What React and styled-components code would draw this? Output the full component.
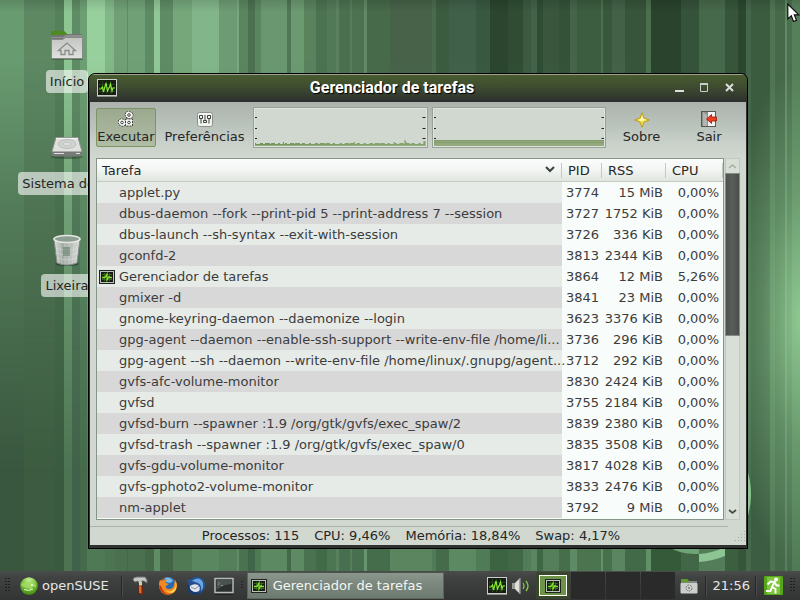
import React from 'react';
import styled, { createGlobalStyle, css } from 'styled-components';

const GlobalStyle = createGlobalStyle`
  *, *::before, *::after { box-sizing: border-box; }
  body {
    margin: 0;
    overflow: hidden;
    font: 13px/15px "DejaVu Sans", sans-serif;
    color: #262626;
  }
  button { font: inherit; color: inherit; padding: 0; border: 0; background: none; }
  svg { display: block; flex: none; }
`;

/* Wallpaper stripes: [start, colour at the top, colour at the bottom] */
const stripes = [
  [0, '#699b70', '#39563e'], [24, '#5d8862', '#3c5b40'], [55, '#54805a', '#395a3f'],
  [64, '#8dc593', '#4d7352'], [72, '#5e8c64', '#40624a'], [80, '#6c9f73', '#446a4b'],
  [87, '#98d09d', '#4f7855'], [105, '#82b788', '#4c7452'], [114, '#709f75', '#4a7050'],
  [127, '#5f8c65', '#436748'], [128, '#70a076', '#4a7050'], [145, '#5d8b63', '#446848'],
  [154, '#90c796', '#5f8c64'], [160, '#5e8b64', '#426645'], [173, '#75a77b', '#4f7a54'],
  [192, '#82b589', '#5a8660'], [219, '#6d9c74', '#557f5a'], [237, '#7aa77f', '#608c66'],
  [239, '#5b855f', '#4a7150'], [248, '#4b7150', '#40654a'], [255, '#5b8560', '#4d7a54'],
  [261, '#6a9770', '#5c8962'], [287, '#4f7655', '#44694a'], [291, '#6b9971', '#5d8a63'],
  [304, '#59825d', '#4a7250'], [316, '#4c7251', '#426a48'], [327, '#527957', '#4c7551'],
  [336, '#5b8260', '#57825d'], [339, '#4b7050', '#487050'], [350, '#587d5b', '#557f5a'],
  [352, '#4d7251', '#487050'], [364, '#628866', '#69956f'], [367, '#466a4a', '#456c4b'],
  [390, '#476249', '#5a855f'], [432, '#4c6b4e', '#507b56'], [436, '#3c5c3f', '#456b4a'],
  [449, '#41604a', '#5c8862'], [476, '#395840', '#4f7b56'], [490, '#2b452e', '#3c6342'],
  [508, '#304d33', '#426848'], [523, '#3b5a40', '#527c58'], [531, '#42624a', '#5a8560'],
  [537, '#304d34', '#3f6745'], [543, '#3a573e', '#547f5a'], [559, '#345238', '#466e4b'],
  [570, '#46644b', '#5e8b64'], [577, '#3c5d3f', '#4b744f'], [601, '#4c704e', '#63906a'],
  [603, '#38583c', '#47704c'], [612, '#436147', '#5a8560'], [625, '#36553a', '#426948'],
  [646, '#4c704f', '#628f68'], [651, '#29432c', '#345a3a'], [681, '#35523a', '#416746'],
  [699, '#47694b', '#527d58'], [725, '#36553a', '#3c603f'], [738, '#2b472e', '#365539'],
  [746, '#45664a', '#45694a'], [751, '#3c5c3f', '#3c5d42'], [770, '#507555', '#4d7552'],
  [775, '#456949', '#446848'], [785, '#608a64', '#578060'], [787, '#4a6e4e', '#466a4a'],
  [792, '#56805a', '#507a55'],
];
const band = (n) =>
  'linear-gradient(90deg,' +
  stripes
    .map((s, i) => `${s[n]} ${s[0] / 8}% ${(i + 1 < stripes.length ? stripes[i + 1][0] : 800) / 8}%`)
    .join(',') +
  ')';

const Desktop = styled.div`
  position: relative;
  height: 100vh;
  display: flex;
  flex-direction: column;
  overflow: hidden;
  background: ${band(2)};
  &::before, &::after { content: ''; position: absolute; inset: 0; }
  &::before {
    background: ${band(1)};
    mask-image: linear-gradient(#000 10%, rgba(0, 0, 0, .55) 35%, transparent 80%);
  }
  &::after {
    background:
      radial-gradient(ellipse 76px 250px at 100% 53%, rgba(162, 226, 165, .75), rgba(162, 226, 165, .3) 50%, transparent),
      linear-gradient(rgba(0, 0, 0, .12), transparent 12px);
  }
`;
const Emblem = styled.svg`
  position: absolute;
  z-index: 1;
  right: 40px;
  bottom: 30px;
`;
const Workspace = styled.main`
  position: relative;
  z-index: 1;
  flex: 1;
  padding: 30px 18px;
`;
const Shortcuts = styled.ul`
  list-style: none;
  margin: 0;
  padding: 0;
  display: grid;
  grid-template-columns: 98px;
  gap: 25px;
`;
const Shortcut = styled.li`
  display: flex;
  flex-direction: column;
  align-items: center;
  gap: 6px;
  height: 77px;
`;
const ShortcutLabel = styled.span`
  padding: 4px;
  border-radius: 4px;
  background: rgba(255, 255, 255, .6);
  white-space: nowrap;
`;

const Window = styled.section`
  position: absolute;
  inset: 73px 52px 22px 88px;
  display: flex;
  flex-direction: column;
  border: 1px solid #000;
  border-radius: 7px 7px 0 0;
  background: #303231;
  padding: 0 1px 3px;
  overflow: hidden;
`;
const TitleBar = styled.header`
  height: 28px;
  flex: none;
  display: flex;
  align-items: center;
  margin: 0 -1px;
  padding: 0 8px 2px;
  border-top: 1px solid #9ca08f;
  background: linear-gradient(#485b2e, #3f4e30 40%, #2d2f2f);
`;
const Title = styled.h1`
  flex: 1;
  margin: 0;
  text-align: center;
  font: bold 16px/20px Roboto, sans-serif;
  color: #fff;
  text-shadow: 1px 1px 1px #000;
`;
const WindowButton = styled.button`
  width: 25px;
  height: 24px;
  display: grid;
  place-items: center;
`;
const Controls = styled.div`
  display: flex;
  margin-right: -3px;
`;
const Body = styled.div`
  flex: 1;
  min-height: 0;
  display: flex;
  flex-direction: column;
  background: linear-gradient(#abb3ac, #bcc5bd 26px, #c8d0c9 40px, #d1d8d0 57px);
`;
const Toolbar = styled.div`
  display: flex;
  align-items: flex-start;
  padding: 5px 5px 10px 6px;
  height: 56px;
  flex: none;
`;
const ToolButton = styled.button`
  flex: none;
  height: 39px;
  margin-top: 1px;
  width: ${(p) => p.$width};
  display: flex;
  flex-direction: column;
  align-items: center;
  justify-content: center;
  gap: 1px;
  border-radius: 2px;
  border: 1px solid transparent;
  ${(p) => p.$active && css`
    border-color: #7c9566;
    background: linear-gradient(#9ba98f, #b0bda5);
  `}
`;
const Graphs = styled.div`
  flex: 1;
  display: grid;
  grid-template-columns: 1fr 1fr;
  gap: 4px;
`;
const Graph = styled.div`
  height: 41px;
  border: 1px solid #98a299;
  padding: 1px;
  box-shadow: inset 0 0 0 1px #dee4dd;
  background: #d1d8d0;
  svg { width: 100%; height: 100%; }
`;
const Listing = styled.div`
  flex: 1;
  min-height: 0;
  display: flex;
  gap: 1px;
  padding: 0 6px;
`;
const Frame = styled.div`
  flex: 1;
  min-width: 0;
  overflow: hidden;
  border: 1px solid #879488;
  background: #f8fcfa;
`;
const Table = styled.table`
  width: 100%;
  table-layout: fixed;
  border-collapse: separate;
  border-spacing: 0;
`;
const Column = styled.col`
  width: ${(p) => p.$width};
`;
const HeadCell = styled.th`
  height: 23px;
  padding: 0 6px 0 ${(p) => (p.$first ? '5px' : '6px')};
  text-align: left;
  font-weight: normal;
  border-bottom: 1px solid #c5ccc3;
  background:
    linear-gradient(#c3cac1, #c3cac1) right 0 center / 1px 15px no-repeat,
    linear-gradient(#fbfdfc, #f2f5f2 50%, #e0e6df);
  > div { display: flex; justify-content: space-between; align-items: center; }
`;
const Row = styled.tr`
  height: 21px;
  --stripe: #e6ebe8;
  &:nth-child(even) { --stripe: #d8d8d8; }
`;
const TaskCell = styled.td`
  padding: 0 0 0 2px;
  background: var(--stripe);
  color: #3c3c3c;
`;
const TaskName = styled.div`
  display: grid;
  grid-template-columns: 16px 1fr;
  gap: 4px;
  align-items: center;
  height: 21px;
  span {
    grid-column: 2;
    white-space: nowrap;
  }
`;
const ValueCell = styled.td`
  padding: 0 ${(p) => (p.$last ? '4px' : '3px')} 0 0;
  text-align: right;
  white-space: nowrap;
  color: #3c3c3c;
`;
const Scrollbar = styled.div`
  width: 15px;
  display: flex;
  flex-direction: column;
  border: 1px solid #c0c8bf;
  background: #d8dfd7;
`;
const ScrollButton = styled.button`
  height: 14px;
  flex: none;
  display: grid;
  place-items: center;
`;
const ScrollTrack = styled.div`
  flex: 1;
  margin: 0 -1px;
`;
const ScrollThumb = styled.div`
  height: 49%;
  border: 1px solid #858c86;
  background: linear-gradient(90deg, #4f5350, #595e5a 50%, #4a4e4b);
`;
const StatusBar = styled.footer`
  flex: none;
  display: flex;
  justify-content: center;
  gap: 15px;
  height: 19px;
  margin: 6px 0 0;
  padding: 2px 14px 0 0;
  position: relative;
  background: linear-gradient(90deg, #aab2aa, #aab2aa) 0 0 / calc(100% - 18px) 1px no-repeat;
`;
const Grip = styled.svg`
  position: absolute;
  right: 0;
  bottom: 2px;
`;

const Panel = styled.nav`
  position: relative;
  z-index: 2;
  flex: none;
  height: 29px;
  display: flex;
  align-items: center;
  padding: 0 4px 0 5px;
  color: #e6e6e6;
  background: linear-gradient(#4a4d4b, #414342 6px, #393b3a 18px, #333534);
`;
const PanelButton = styled.button`
  display: flex;
  align-items: center;
  gap: 4px;
`;
const Start = styled(PanelButton)`
  margin: 0 12px 0 9px;
`;
const Separator = styled.span`
  width: 2px;
  height: 20px;
  background: linear-gradient(90deg, #262827 50%, #4a4d4b 50%);
`;
const Launchers = styled.div`
  display: flex;
  align-items: center;
  gap: 8px;
  margin: 0 7px;
`;
const TaskButton = styled.button`
  flex: 0 1 197px;
  height: 27px;
  display: flex;
  align-items: center;
  gap: 6px;
  margin: 0 auto 0 3px;
  padding: 0 3px;
  text-align: left;
  color: #f4f6f4;
  border: 1px solid #5b655c;
  border-top-color: #4c544d;
  background: linear-gradient(#8b968d, #7d897f 40%, #6d7a70);
`;
const Tray = styled.div`
  display: flex;
  align-items: center;
  gap: 4px;
`;
const Pager = styled.div`
  display: grid;
  grid-template-columns: repeat(4, 34px);
  gap: 1px;
  margin: 0 5px 0 6px;
`;
const Desk = styled.button`
  height: 27px;
  padding: 3px;
  background: ${(p) => (p.$current ? '#38462a' : '#292a29')};
`;
const MiniWindow = styled.span`
  display: grid;
  place-items: center;
  height: 21px;
  border: 1px solid #fff;
  background: #6d9446;
`;
const Clock = styled.time`
  margin: 0 5px 0 6px;
`;
const TrayEnd = styled.div`
  display: flex;
  margin: 0 7px;
`;
const TrayFolder = styled.div`
  margin-right: 7px;
`;
const Pointer = styled.svg`
  position: absolute;
  z-index: 3;
  top: 3px;
  right: 0;
`;

const MonitorIcon = ({ width = 16, height = 14, wide }) => (
  <svg width={width} height={height} viewBox={wide ? '0 0 20 18' : '0 0 16 14'}>
    {wide ? (
      <>
        <rect x=".5" y=".5" width="19" height="16" fill="#171d14" stroke="#c9cec9" />
        <path d="M0 17.5h20" stroke="#8b908b" />
        <path d="M2 5.5h16M2 8.5h16M2 12.5h16M5.500 2v13M9.500 2v13M13.500 2v13" stroke="#264318" />
        <path d="M2 10h2l1.500-2 1 5L9 4l1.500 8 2-4 1-3 1.500 7 1-3h2" fill="none" stroke="#86ea30" strokeWidth="1.200" />
      </>
    ) : (
      <>
        <rect x=".5" y=".5" width="15" height="13" fill="#bcc2bc" stroke="#202320" />
        <rect x="2" y="2" width="12" height="10" fill="#171d14" />
        <path d="M3 4.500h10M3 9.500h10M5.500 3v8M10.500 3v8" stroke="#35601d" />
        <path d="M3 7.500h3l2-3.500v6l2-3.500 1 1h2" fill="none" stroke="#82e12d" strokeWidth="1.300" />
      </>
    )}
  </svg>
);
const FolderIcon = () => (
  <svg width="34" height="34" viewBox="0 0 34 34">
    <path d="M1 12V2l1-1h12l3 3h15v8H1z" fill="#747474" />
    <path d="M1 5V2l1-1h12l3 3-2 1z" fill="#4d8a1f" />
    <path d="M1 7h12l3-2h16v3H1z" fill="#8f908f" />
    <path d="M1.500 9.500h11l3-2h17v21h-31z" fill="url(#folderFace)" stroke="#858885" />
    <path d="M8.500 20.500l8.500-7.500 8.500 7.500h-2.500v4h-4v-4h-4v4h-4v-4z" fill="none" stroke="#8b8d8a" strokeWidth="1.300" />
    <path d="M1 29.500h32" stroke="#36573a" opacity=".6" />
    <defs>
      <linearGradient id="folderFace" x1="0" x2="0" y1="0" y2="1">
        <stop stopColor="#c2c5c1" /><stop offset="1" stopColor="#dfe1de" />
      </linearGradient>
    </defs>
  </svg>
);
const DriveIcon = () => (
  <svg width="34" height="34" viewBox="0 4 34 34">
    <ellipse cx="17" cy="29" rx="16" ry="2" fill="#263f2a" opacity=".5" />
    <path d="M6 9.500h22l4 14-1 4H3l-1-4z" fill="#dfe1df" stroke="#929592" />
    <path d="M2 23.500h30v4l-1 1H3l-1-1z" fill="#777a77" />
    <path d="M4 25.500h10M26 25.500h4" stroke="#dedede" />
    <ellipse cx="17" cy="16" rx="9" ry="4.500" fill="#d1d3d1" stroke="#bbbdbb" />
    <ellipse cx="17" cy="16" rx="4" ry="1.500" fill="#e7e8e7" stroke="#bfc1bf" />
    <path d="M6 10.500h22" stroke="#f2f3f2" />
  </svg>
);
const TrashIcon = () => (
  <svg width="30" height="34" viewBox="0 0 30 34">
    <ellipse cx="15" cy="30" rx="12" ry="2" fill="#203824" opacity=".6" />
    <path d="M2 5l3 24q10 4 20 0l3-24z" fill="url(#binSide)" stroke="#868a87" />
    <path d="M8 9l2 21M13 10v21M17 10v21M22 9l-2 21M4 14q11 4 22 0M4 19q11 4 22 0M5 24q10 4 20 0" stroke="#f1f3f1" strokeWidth=".6" opacity=".5" fill="none" />
    <path d="M11 13h7v9h-7z" fill="#60806a" opacity=".6" />
    <ellipse cx="15" cy="5" rx="13" ry="3.500" fill="#8c9f90" stroke="#e6e8e6" strokeWidth="1.600" />
    <defs>
      <linearGradient id="binSide">
        <stop stopColor="#e3e5e3" /><stop offset=".3" stopColor="#a3aba5" />
        <stop offset=".7" stopColor="#bcc2bd" /><stop offset="1" stopColor="#dfe2df" />
      </linearGradient>
    </defs>
  </svg>
);
const GearsIcon = () => (
  <svg width="16" height="17" viewBox="0 0 16 17" fill="#f6f7f4" stroke="#474945">
    {[[11, 4], [4, 11.5], [11, 11.500]].map(([x, y], i) => (
      <g key={i} transform={`translate(${x} ${y})`}>
        <path d={i === 2 ? 'M-3.500-3.500h7v7h-7z' : 'M0-4l1.500 1 2 1v1.500l1 .5-1 1v1.500l-2 1L0 4l-1.500-1-2-1V.5l-1-.5 1-1v-1.500l2-1z'} strokeDasharray="2 1" />
        <circle r="1.300" />
      </g>
    ))}
  </svg>
);
const SlidersIcon = () => (
  <svg width="16" height="16" viewBox="0 0 16 16" fill="none" stroke="#3f423f">
    <rect x=".5" y=".5" width="15" height="14" rx="2" fill="#f1f3f0" stroke="#8b928b" />
    <path d="M2.500 3.500h3v3h-3zM6.500 8.500h3v2h-3zM10.500 3.500h3v3h-3z" />
    <path d="M4 6.500v5M8 3v5.500M12 6.500v5" />
  </svg>
);
const StarIcon = () => (
  <svg width="16" height="16" viewBox="0 0 16 16">
    <path d="M8 .8l2 5.200 5.300 2-5.300 2-2 5.300-2-5.300-5.300-2L6 6z" fill="#f0df4b" stroke="#bd9d18" />
    <path d="M8 3l1 4 4 1-4 .5L7 9 4 8l3-1z" fill="#fffbd0" />
  </svg>
);
const QuitIcon = () => (
  <svg width="16" height="17" viewBox="0 0 16 17">
    <rect x=".5" y=".5" width="14" height="15" fill="#f4f4f2" stroke="#565856" />
    <path d="M1 1h6v14H1z" fill="#8c8e8c" />
    <path d="M2 1l4 3v11H2z" fill="#b3b5b2" />
    <path d="M5.500 8l5-4.500V6h5v4h-5v2.500z" fill="#ef3d20" stroke="#8d1809" strokeWidth=".8" />
  </svg>
);
const SuseIcon = () => (
  <svg width="18" height="18" viewBox="0 0 18 18">
    <defs>
      <radialGradient id="suse" cy=".15" r=".8"><stop stopColor="#c8ee9b" /><stop offset=".5" stopColor="#7cc53a" /><stop offset="1" stopColor="#4c9419" /></radialGradient>
    </defs>
    <circle cx="9" cy="9" r="8.700" fill="url(#suse)" />
    <path d="M1 7q6-3 12-1 3 1 3 4l-4-.5q1 2-1 2.500-5 0-9-3z" fill="#a5dc6c" opacity=".8" />
    <path d="M4 12.500q5 2 9-.5" fill="none" stroke="#e4f7cf" />
    <circle cx="12" cy="8" r="1" fill="#f6ffec" />
  </svg>
);
const HammerIcon = () => (
  <svg width="20" height="20" viewBox="0 0 20 20">
    <path d="M3 4q0-3 4-3h8l2 3v3l-3-2h-2l-1 2H9L8 5 5 6z" fill="#c5c7c4" stroke="#70736f" />
    <path d="M9 6h3v5H9z" fill="#d9d0b0" />
    <path d="M8.500 10h4l.5 7q-2 3-4 0z" fill="#b1391e" stroke="#672010" />
    <path d="M10 10v7" stroke="#efb03c" />
  </svg>
);
const FirefoxIcon = () => (
  <svg width="20" height="20" viewBox="0 0 20 20">
    <circle cx="10" cy="10" r="9" fill="#e8661b" />
    <circle cx="10.500" cy="8" r="7" fill="#2869b0" />
    <path d="M7 2q5-2 8 3l-3 2-4-1z" fill="#75bce8" />
    <path d="M2 4l2 1q2-2 5-1-2 2-1 3l3 1-3 2q-1 3 3 3 4 0 5-4l1-5q4 6-1 11-6 4-11 0Q-1 11 2 4z" fill="#f08a20" />
    <path d="M17 5q2 6-2 9-4 3-8 0 5 6 10 1 3-5 0-10z" fill="#ffd34a" />
    <path d="M1 9q1 7 7 9-4-4-5-8z" fill="#c6350f" />
  </svg>
);
const ThunderbirdIcon = () => (
  <svg width="20" height="20" viewBox="0 0 20 20">
    <circle cx="11" cy="9" r="8" fill="#2f61a8" />
    <path d="M1 3q3 2 6-1 6-3 10 2 4 7-2 13-6 3-11 0-4-4-3-8l3-1Q1 7 1 3z" fill="#244f93" />
    <path d="M2 4q4 2 7-1 6-2 8 4 1 5-2 8 1-6-3-8-5-2-10-3z" fill="#6aa6e2" />
    <path d="M4 10q4-3 8-1 3 2 1 6-4 2-7 0-3-2-2-5z" fill="#dfe5ea" />
    <path d="M5 11l4 2 4-3" fill="none" stroke="#8293a8" />
    <path d="M1 9q0 6 5 9 5 2 9-2-6 2-9-1-3-2-3-6z" fill="#173769" />
  </svg>
);
const TerminalIcon = () => (
  <svg width="20" height="18" viewBox="0 0 20 18">
    <rect x="1" y="1.500" width="18" height="14" fill="#2b302e" stroke="#b5bab6" strokeWidth="1.500" />
    <path d="M2.500 3h15v4q-8 0-15 6z" fill="#4b534f" />
    <path d="M4 5l1.500 1.500L4 8M7 8.500h2" fill="none" stroke="#8f9691" strokeWidth=".9" />
    <path d="M1 17.500h18" stroke="#222" />
  </svg>
);
const SpeakerIcon = () => (
  <svg width="19" height="18" viewBox="0 0 19 18">
    <path d="M1 6h3v6H1z" fill="#989b98" />
    <path d="M4 6l5-5v16l-5-5z" fill="#dddfdd" />
    <path d="M9 1v16" stroke="#8a8d8a" strokeWidth="1.500" />
    <path d="M12 6q2 3 0 6M15 4q4 5 0 10" fill="none" stroke="#85c947" strokeWidth="1.300" />
  </svg>
);
const FolderTrayIcon = () => (
  <svg width="18" height="18" viewBox="0 0 18 18">
    <path d="M1 3q0-1 1-1h5l2 2h8v12H1z" fill="#848784" />
    <path d="M1 5V2h6l2 2v1z" fill="#5d9c2b" />
    <rect x=".5" y="6" width="17" height="10.500" rx="1" fill="#cbcecb" />
    <circle cx="9" cy="11" r="3" fill="none" stroke="#777a77" strokeDasharray="2 1" />
    <circle cx="9" cy="11" r="1" fill="#777a77" />
  </svg>
);
const ExitIcon = () => (
  <svg width="19" height="19" viewBox="0 0 19 19">
    <rect width="19" height="19" rx="1" fill="#57a51b" />
    <path d="M3 1h13v17H3z" fill="#7fc53d" />
    <circle cx="12" cy="3.500" r="2" fill="#fff" />
    <path d="M3.500 8.500l3-3 4 .5-2.500 5 3.500 2v4.500M8 11l-1.500 4H2M10.500 6l2 3.500h3" fill="none" stroke="#fff" strokeWidth="1.900" />
  </svg>
);
const PanelGrip = ({ cols = 2, rows = 5 }) => (
  <svg width={cols * 3} height={rows * 3} fill="#202221">
    {Array.from({ length: cols * rows }, (_, i) => (
      <rect key={i} x={(i % cols) * 3} y={Math.floor(i / cols) * 3} width="2" height="1" />
    ))}
  </svg>
);

const ticks = [8, 19, 29];
const Ticks = () => ticks.map((y) => (
  <React.Fragment key={y}>
    <rect x="0" y={y} width="2" height="1" fill="#222" />
    <rect x="168" y={y} width="3" height="1" fill="#222" />
  </React.Fragment>
));
const cpuLoad = Array.from({ length: 171 }, (_, i) =>
  i === 150 ? 6 : i === 151 ? 4 : i === 169 || i === 170 ? 5 : [28, 99, 139].includes(i) ? 4 : (i * 7 + (i % 5) * 3) % 11 < 6 ? 3 : 2
);

const processes = [
  ['applet.py', 3774, '15 MiB', '0,00%'],
  ['dbus-daemon --fork --print-pid 5 --print-address 7 --session', 3727, '1752 KiB', '0,00%'],
  ['dbus-launch --sh-syntax --exit-with-session', 3726, '336 KiB', '0,00%'],
  ['gconfd-2', 3813, '2344 KiB', '0,00%'],
  ['Gerenciador de tarefas', 3864, '12 MiB', '5,26%', true],
  ['gmixer -d', 3841, '23 MiB', '0,00%'],
  ['gnome-keyring-daemon --daemonize --login', 3623, '3376 KiB', '0,00%'],
  ['gpg-agent --daemon --enable-ssh-support --write-env-file /home/li...', 3736, '296 KiB', '0,00%'],
  ['gpg-agent --sh --daemon --write-env-file /home/linux/.gnupg/agent...', 3712, '292 KiB', '0,00%'],
  ['gvfs-afc-volume-monitor', 3830, '2424 KiB', '0,00%'],
  ['gvfsd', 3755, '2184 KiB', '0,00%'],
  ['gvfsd-burn --spawner :1.9 /org/gtk/gvfs/exec_spaw/2', 3839, '2380 KiB', '0,00%'],
  ['gvfsd-trash --spawner :1.9 /org/gtk/gvfs/exec_spaw/0', 3835, '3508 KiB', '0,00%'],
  ['gvfs-gdu-volume-monitor', 3817, '4028 KiB', '0,00%'],
  ['gvfs-gphoto2-volume-monitor', 3833, '2476 KiB', '0,00%'],
  ['nm-applet', 3792, '9 MiB', '0,00%'],
];

export default function App() {
  return (
    <Desktop>
      <GlobalStyle />
      <Emblem width="120" height="110" viewBox="640 460 120 110">
        <path d="M746 466q10 28 0 56zM699 554q14-1 26-7v9q-12 5-26 6z" fill="#8dc494" />
        <path d="M668 546q12 9 31 8v-8z" fill="#6fa476" />
      </Emblem>
      <Workspace>
        <Shortcuts>
          <Shortcut><FolderIcon /><ShortcutLabel>Início</ShortcutLabel></Shortcut>
          <Shortcut><DriveIcon /><ShortcutLabel>Sistema de ...</ShortcutLabel></Shortcut>
          <Shortcut><TrashIcon /><ShortcutLabel>Lixeira</ShortcutLabel></Shortcut>
        </Shortcuts>
        <Window>
          <TitleBar>
            <MonitorIcon wide width={20} height={18} />
            <Title>Gerenciador de tarefas</Title>
            <Controls>
              <WindowButton aria-label="Minimizar">
                <svg width="11" height="11"><path d="M1 9h9" stroke="#dcdedb" strokeWidth="2" /></svg>
              </WindowButton>
              <WindowButton aria-label="Maximizar">
                <svg width="11" height="11"><path d="M1.500 2.500h7v7h-7z" fill="none" stroke="#c9ccc8" /><path d="M1 2h8" stroke="#c9ccc8" strokeWidth="2" /></svg>
              </WindowButton>
              <WindowButton aria-label="Fechar">
                <svg width="11" height="11"><path d="M2 2l7 7M9 2L2 9" stroke="#dcdedb" strokeWidth="2" /></svg>
              </WindowButton>
            </Controls>
          </TitleBar>
          <Body>
            <Toolbar>
              <ToolButton $width="60px" $active><GearsIcon />Executar</ToolButton>
              <ToolButton $width="97px"><SlidersIcon />Preferências</ToolButton>
              <Graphs>
                <Graph>
                  <svg viewBox="0 0 171 37" preserveAspectRatio="none">
                    <Ticks />
                    {cpuLoad.map((h, i) => <rect key={i} x={i} y={37 - h} width="1" height={h} fill="#6e9453" />)}
                    <path d="M0 36.500h171" stroke="#96ac80" />
                  </svg>
                </Graph>
                <Graph>
                  <svg viewBox="0 0 171 37" preserveAspectRatio="none">
                    <Ticks />
                    <rect y="31" width="171" height="6" fill="#94a97e" />
                    <path d="M0 31.500h171M0 33.500h171" stroke="#829b6a" />
                  </svg>
                </Graph>
              </Graphs>
              <ToolButton $width="71px"><StarIcon />Sobre</ToolButton>
              <ToolButton $width="64px"><QuitIcon />Sair</ToolButton>
            </Toolbar>
            <Listing>
              <Frame>
                <Table>
                  <colgroup>
                    <Column /><Column $width="40px" /><Column $width="64px" /><Column $width="57px" />
                  </colgroup>
                  <thead>
                    <tr>
                      <HeadCell $first scope="col">
                        <div>
                          Tarefa
                          <svg width="12" height="8"><path d="M2 1l4 4 4-4" fill="none" stroke="#3d403d" strokeWidth="2" /></svg>
                        </div>
                      </HeadCell>
                      <HeadCell scope="col">PID</HeadCell>
                      <HeadCell scope="col">RSS</HeadCell>
                      <HeadCell scope="col">CPU</HeadCell>
                    </tr>
                  </thead>
                  <tbody>
                    {processes.map(([name, pid, rss, cpu, icon]) => (
                      <Row key={pid}>
                        <TaskCell><TaskName>{icon && <MonitorIcon />}<span>{name}</span></TaskName></TaskCell>
                        <ValueCell>{pid}</ValueCell>
                        <ValueCell>{rss}</ValueCell>
                        <ValueCell $last>{cpu}</ValueCell>
                      </Row>
                    ))}
                  </tbody>
                </Table>
              </Frame>
              <Scrollbar>
                <ScrollButton aria-label="Rolar para cima">
                  <svg width="9" height="6"><path d="M1 5l3.500-3L8 5" fill="none" stroke="#a5ada5" strokeWidth="1.500" /></svg>
                </ScrollButton>
                <ScrollTrack><ScrollThumb /></ScrollTrack>
                <ScrollButton aria-label="Rolar para baixo">
                  <svg width="9" height="6"><path d="M1 1l3.500 3L8 1" fill="none" stroke="#464a46" strokeWidth="1.700" /></svg>
                </ScrollButton>
              </Scrollbar>
            </Listing>
            <StatusBar>
              <span>Processos: 115</span>
              <span>CPU: 9,46%</span>
              <span>Memória: 18,84%</span>
              <span>Swap: 4,17%</span>
              <Grip width="12" height="12" fill="#a2aaa2">
                {[0, 1, 2, 3].flatMap((r) => Array.from({ length: r + 1 }, (_, c) => (
                  <rect key={`${r}${c}`} x={10 - c * 3} y={r * 3} width="1" height="1" />
                )))}
              </Grip>
            </StatusBar>
          </Body>
        </Window>
      </Workspace>
      <Panel>
        <PanelGrip />
        <Start><SuseIcon />openSUSE</Start>
        <Separator />
        <Launchers>
          <PanelButton aria-label="Ferramentas"><HammerIcon /></PanelButton>
          <PanelButton aria-label="Firefox"><FirefoxIcon /></PanelButton>
          <PanelButton aria-label="Thunderbird"><ThunderbirdIcon /></PanelButton>
          <PanelButton aria-label="Terminal"><TerminalIcon /></PanelButton>
        </Launchers>
        <PanelGrip cols={1} rows={3} />
        <TaskButton><MonitorIcon />Gerenciador de tarefas</TaskButton>
        <Tray>
          <MonitorIcon wide width={20} height={18} />
          <SpeakerIcon />
        </Tray>
        <Pager>
          <Desk $current aria-label="Área 1"><MiniWindow><MonitorIcon /></MiniWindow></Desk>
          <Desk aria-label="Área 2" />
          <Desk aria-label="Área 3" />
          <Desk aria-label="Área 4" />
        </Pager>
        <TrayFolder><FolderTrayIcon /></TrayFolder>
        <Separator />
        <Clock>21:56</Clock>
        <Separator />
        <TrayEnd><PanelButton aria-label="Sair da sessão"><ExitIcon /></PanelButton></TrayEnd>
        <PanelGrip />
      </Panel>
      <Pointer width="13" height="20" viewBox="0 0 13 20">
        <path d="M.8 1v15l3.500-3.200 2.200 5.700 3-1.200-2.200-5.500h4.500z" fill="#fff" stroke="#111" strokeWidth="1.200" />
      </Pointer>
    </Desktop>
  );
}
